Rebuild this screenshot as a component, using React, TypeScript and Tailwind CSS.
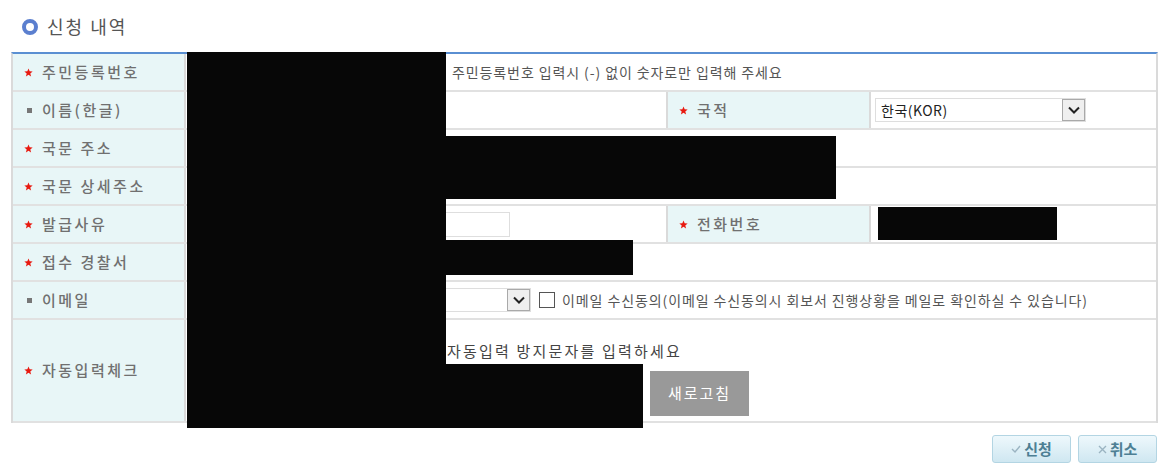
const FONT = { fontFamily: '"Noto Sans CJK KR", "Noto Sans", sans-serif' };

function Mark({ required }: { required: boolean }) {
  if (!required) return <span className="mr-[10px] ml-[3px] inline-block h-[5px] w-[5px] bg-[#777]" />;
  return (
    <svg width="9" height="9" viewBox="0 0 10 10" className="mr-[9px]">
      <path d="M5 0.5 L6.3 3.6 L9.6 3.8 L7 6 L7.9 9.4 L5 7.6 L2.1 9.4 L3 6 L0.4 3.8 L3.7 3.6 Z" fill="#e8190f" />
    </svg>
  );
}

function Label({ text, required = true, className = "" }: { text: string; required?: boolean; className?: string }) {
  return (
    <div className={`flex items-center bg-[#e8f6f7] pl-[11px] text-[15px] font-medium tracking-[2.5px] text-[#707070] ${className}`}>
      <Mark required={required} />
      <span>{text}</span>
    </div>
  );
}

function Arrow() {
  return (
    <span className="flex h-[22px] w-[23px] items-center justify-center border border-[#a9a9a9] bg-[#efefef]">
      <svg width="12" height="8" viewBox="0 0 12 8">
        <path d="M1 1.5 L6 6.5 L11 1.5" fill="none" stroke="#222" strokeWidth="2" />
      </svg>
    </span>
  );
}

function Row({ children, h = "h-[38px]" }: { children: React.ReactNode; h?: string }) {
  return <div className={`grid grid-cols-[173px_480px_205px_1fr] border-b-2 border-[#e1e1e1] ${h}`}>{children}</div>;
}

const lbl = "border-r-2 border-[#dadada]";

export default function App() {
  return (
    <div className="relative h-[469px] w-[1167px] bg-white" style={FONT}>
      <div className="flex items-center pt-[13px] pl-[22px]">
        <span className="h-[16px] w-[16px] rounded-full border-[4px] border-[#5b7fcf] bg-white" />
        <span className="ml-[9px] text-[18px] tracking-[2px] text-[#555]">신청 내역</span>
      </div>

      <div className="mt-[12px] ml-[11px] w-[1147px] border-x-2 border-t-[2px] border-x-[#dadada] border-t-[#5a8fd2]">
        <Row>
          <Label text="주민등록번호" className={lbl} />
          <div className="col-span-3 flex items-center pl-[266px] text-[14px] tracking-[0.9px] text-[#555]">
            주민등록번호 입력시 (-) 없이 숫자로만 입력해 주세요
          </div>
        </Row>
        <Row>
          <Label text="이름(한글)" required={false} className={lbl} />
          <div />
          <Label text="국적" className="border-x-2 border-[#dadada]" />
          <div className="flex items-center pl-[4px]">
            <div className="flex h-[24px] w-[211px] items-center justify-between border border-[#dedede] pl-[5px]">
              <span className="text-[14px] tracking-[0.5px] text-[#222]">한국(KOR)</span>
              <Arrow />
            </div>
          </div>
        </Row>
        <Row>
          <Label text="국문 주소" className={lbl} />
          <div className="col-span-3" />
        </Row>
        <Row>
          <Label text="국문 상세주소" className={lbl} />
          <div className="col-span-3" />
        </Row>
        <Row>
          <Label text="발급사유" className={lbl} />
          <div className="flex items-center">
            <div className="ml-[250px] h-[25px] w-[74px] border border-[#dedede]" />
          </div>
          <Label text="전화번호" className="border-x-2 border-[#dadada]" />
          <div />
        </Row>
        <Row>
          <Label text="접수 경찰서" className={lbl} />
          <div className="col-span-3" />
        </Row>
        <Row>
          <Label text="이메일" required={false} className={lbl} />
          <div className="col-span-3 flex items-center pl-[255px]">
            <div className="flex h-[24px] w-[90px] items-center justify-end border border-[#dedede]">
              <Arrow />
            </div>
            <span className="ml-[8px] h-[16px] w-[16px] border border-[#555] bg-white" />
            <span className="ml-[7px] text-[14px] tracking-[0.9px] text-[#555]">
              이메일 수신동의(이메일 수신동의시 회보서 진행상황을 메일로 확인하실 수 있습니다)
            </span>
          </div>
        </Row>
        <Row h="h-[103px]">
          <Label text="자동입력체크" className={lbl} />
          <div className="col-span-3 flex flex-col pl-[261px] pt-[20px]">
            <span className="text-[15px] tracking-[2.2px] text-[#444]">자동입력 방지문자를 입력하세요</span>
            <div className="mt-[8px] flex">
              <div className="h-[46px] w-[198px]" />
              <button className="ml-[5px] h-[45px] w-[99px] bg-[#999] text-[15px] tracking-[2px] text-white">새로고침</button>
            </div>
          </div>
        </Row>
      </div>

      <div className="mt-[12px] mr-[10px] flex justify-end gap-[7px]">
        <button className="flex h-[28px] w-[79px] items-center justify-center gap-[3px] rounded-[3px] border border-[#b3d5e3] bg-gradient-to-b from-[#eef8fc] to-[#cfe7f1] text-[15px] font-bold text-[#4d7f94]">
          <svg width="10" height="8" viewBox="0 0 10 8"><path d="M1 4 L4 7 L9 1" fill="none" stroke="#9bb4c2" strokeWidth="1.4" /></svg>
          신청
        </button>
        <button className="flex h-[28px] w-[79px] items-center justify-center gap-[3px] rounded-[3px] border border-[#b3d5e3] bg-gradient-to-b from-[#eef8fc] to-[#cfe7f1] text-[15px] font-bold text-[#4d7f94]">
          <svg width="9" height="9" viewBox="0 0 9 9"><path d="M1 1 L8 8 M8 1 L1 8" fill="none" stroke="#9bb4c2" strokeWidth="1.4" /></svg>
          취소
        </button>
      </div>

      {/* redactions */}
      <div className="absolute top-[52px] left-[187px] h-[376px] w-[259px] bg-[#070707]" />
      <div className="absolute top-[136px] left-[446px] h-[63px] w-[390px] bg-[#070707]" />
      <div className="absolute top-[240px] left-[446px] h-[35px] w-[187px] bg-[#070707]" />
      <div className="absolute top-[364px] left-[446px] h-[64px] w-[197px] bg-[#070707]" />
      <div className="absolute top-[207px] left-[878px] h-[33px] w-[179px] bg-[#070707]" />
    </div>
  );
}
